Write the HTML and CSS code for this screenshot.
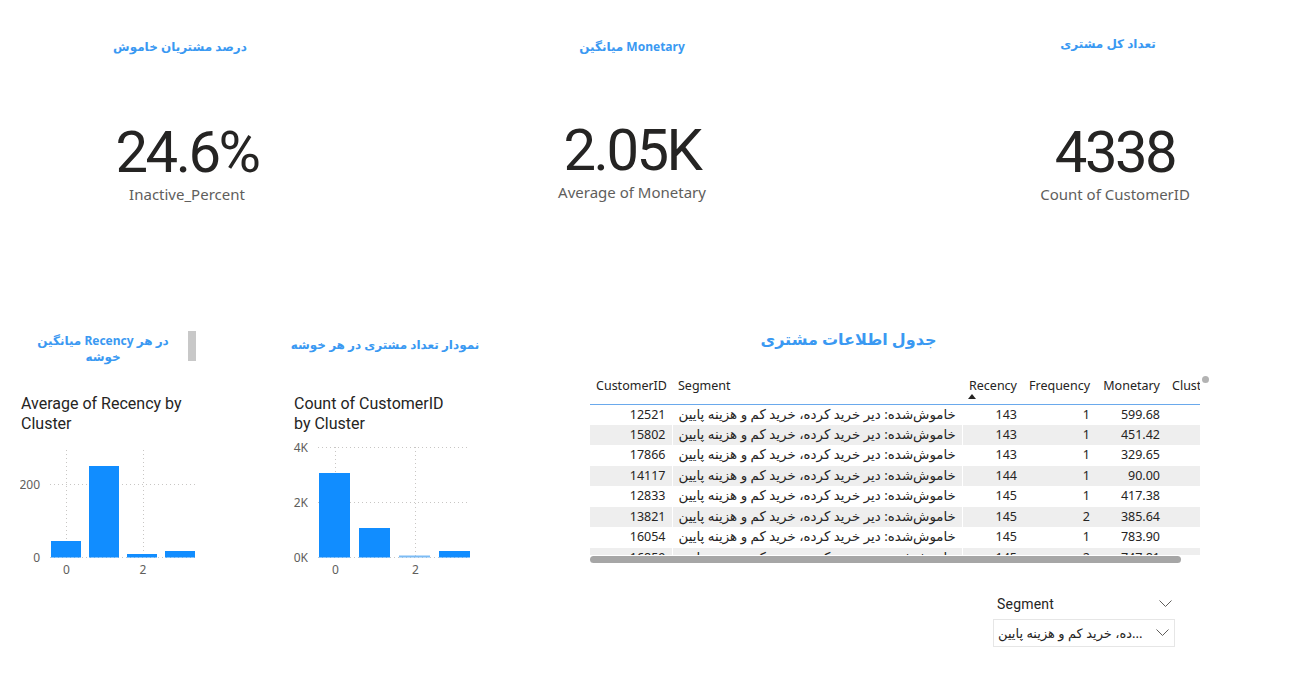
FILE: index.html
```html
<!DOCTYPE html>
<html lang="fa" dir="ltr">
<head>
<meta charset="utf-8">
<title>داشبورد مشتریان</title>
<link rel="stylesheet" href="styles.css">
</head>
<body>
<main class="canvas">
  <section class="kpis">
    <div class="card card-1">
      <div class="card-title">درصد مشتریان خاموش</div>
      <div class="card-value">24.6%</div>
      <div class="card-label">Inactive_Percent</div>
    </div>
    <div class="card card-2">
      <div class="card-title">میانگین Monetary</div>
      <div class="card-value">2.05K</div>
      <div class="card-label">Average of Monetary</div>
    </div>
    <div class="card card-3">
      <div class="card-title">تعداد کل مشتری</div>
      <div class="card-value">4338</div>
      <div class="card-label">Count of CustomerID</div>
    </div>
  </section>

  <section class="lower">
    <div class="chart chart-1">
      <div class="tbox">
        <div class="tbox-text">میانگین Recency در هر<br>خوشه</div>
        <div class="tbox-scroll"></div>
      </div>
      <div class="chart-title">Average of Recency by<br>Cluster</div>
      <svg class="plot" width="180" height="140" viewBox="0 0 180 140">
        <g class="grid">
          <line x1="46.5" y1="10" x2="46.5" y2="117"/>
          <line x1="123.5" y1="10" x2="123.5" y2="117"/>
          <line x1="30" y1="44.5" x2="176" y2="44.5"/>
          <line x1="30" y1="117.5" x2="176" y2="117.5"/>
        </g>
        <g class="bars">
          <rect x="31" y="101" width="30" height="16.5"/>
          <rect x="69" y="26" width="30" height="91.5"/>
          <rect x="107" y="114" width="30" height="3.5"/>
          <rect x="145" y="111" width="30" height="6.5"/>
        </g>
        <g class="ylab">
          <text x="20" y="49">200</text>
          <text x="20" y="122">0</text>
        </g>
        <g class="xlab">
          <text x="46.5" y="134">0</text>
          <text x="123" y="134">2</text>
        </g>
      </svg>
    </div>

    <div class="chart chart-2">
      <div class="tbox tbox-single">
        <div class="tbox-text">نمودار تعداد مشتری در هر خوشه</div>
      </div>
      <div class="chart-title">Count of CustomerID<br>by Cluster</div>
      <svg class="plot" width="190" height="140" viewBox="0 0 190 140">
        <g class="grid">
          <line x1="45.5" y1="7" x2="45.5" y2="117"/>
          <line x1="125.5" y1="7" x2="125.5" y2="117"/>
          <line x1="28" y1="7.5" x2="179" y2="7.5"/>
          <line x1="28" y1="62.5" x2="179" y2="62.5"/>
          <line x1="28" y1="117.5" x2="179" y2="117.5"/>
        </g>
        <g class="bars">
          <rect x="29" y="33" width="31" height="84.5"/>
          <rect x="69" y="88" width="31" height="29.5"/>
          <rect class="bar-light" x="109" y="115.5" width="31" height="2"/>
          <rect x="149" y="111" width="31" height="6.5"/>
        </g>
        <g class="ylab">
          <text x="18" y="12">4K</text>
          <text x="18" y="67">2K</text>
          <text x="18" y="122">0K</text>
        </g>
        <g class="xlab">
          <text x="45.5" y="134">0</text>
          <text x="125.5" y="134">2</text>
        </g>
      </svg>
    </div>

    <div class="table-area">
      <div class="table-title">جدول اطلاعات مشتری</div>
      <div class="tbl-wrap">
        <table class="tbl">
          <colgroup>
            <col class="c-id"><col class="c-seg"><col class="c-rec"><col class="c-freq"><col class="c-mon"><col class="c-clu">
          </colgroup>
          <thead>
            <tr>
              <th class="num">CustomerID</th>
              <th class="txt">Segment</th>
              <th class="num sorted">Recency<span class="sort-arrow"></span></th>
              <th class="num">Frequency</th>
              <th class="num">Monetary</th>
              <th class="txt">Cluster</th>
            </tr>
          </thead>
          <tbody>
            <tr><td class="num">12521</td><td class="seg">خاموش‌شده: دیر خرید کرده، خرید کم و هزینه پایین</td><td class="num">143</td><td class="num">1</td><td class="num">599.68</td><td></td></tr>
            <tr><td class="num">15802</td><td class="seg">خاموش‌شده: دیر خرید کرده، خرید کم و هزینه پایین</td><td class="num">143</td><td class="num">1</td><td class="num">451.42</td><td></td></tr>
            <tr><td class="num">17866</td><td class="seg">خاموش‌شده: دیر خرید کرده، خرید کم و هزینه پایین</td><td class="num">143</td><td class="num">1</td><td class="num">329.65</td><td></td></tr>
            <tr><td class="num">14117</td><td class="seg">خاموش‌شده: دیر خرید کرده، خرید کم و هزینه پایین</td><td class="num">144</td><td class="num">1</td><td class="num">90.00</td><td></td></tr>
            <tr><td class="num">12833</td><td class="seg">خاموش‌شده: دیر خرید کرده، خرید کم و هزینه پایین</td><td class="num">145</td><td class="num">1</td><td class="num">417.38</td><td></td></tr>
            <tr><td class="num">13821</td><td class="seg">خاموش‌شده: دیر خرید کرده، خرید کم و هزینه پایین</td><td class="num">145</td><td class="num">2</td><td class="num">385.64</td><td></td></tr>
            <tr><td class="num">16054</td><td class="seg">خاموش‌شده: دیر خرید کرده، خرید کم و هزینه پایین</td><td class="num">145</td><td class="num">1</td><td class="num">783.90</td><td></td></tr>
            <tr><td class="num">16859</td><td class="seg">خاموش‌شده: دیر خرید کرده، خرید کم و هزینه پایین</td><td class="num">145</td><td class="num">2</td><td class="num">747.81</td><td></td></tr>
          </tbody>
        </table>
      </div>
      <div class="hscroll"></div>
      <span class="vdot"></span>

      <div class="slicer">
        <div class="slicer-head">
          <span class="slicer-name">Segment</span>
          <svg class="chev" width="13" height="8" viewBox="0 0 13 8"><polyline points="0.5,0.5 6.5,6.5 12.5,0.5"/></svg>
        </div>
        <div class="slicer-box">
          <span class="slicer-value" dir="ltr">ده، خرید کم و هزینه پایین...</span>
          <svg class="chev" width="13" height="8" viewBox="0 0 13 8"><polyline points="0.5,0.5 6.5,6.5 12.5,0.5"/></svg>
        </div>
      </div>
    </div>
  </section>
</main>
</body>
</html>
```
FILE: styles.css
```css
* { box-sizing: border-box; margin: 0; padding: 0; }

html, body {
  width: 1296px;
  height: 689px;
  overflow: hidden;
  background: #ffffff;
}

body {
  font-family: "Noto Sans", "DejaVu Sans", sans-serif;
  color: #252423;
}

.canvas {
  width: 1296px;
  height: 689px;
}

/* ---------- KPI cards ---------- */
.kpis {
  display: flex;
  height: 330px;
  padding-top: 36px;
}

.card {
  width: 300px;
  display: flex;
  flex-direction: column;
  align-items: center;
}

.card-1 { margin-left: 34px; }
.card-2 { margin-left: 148px; }
.card-3 { margin-left: 178px; }

.card-title {
  font: 700 12px/22px "Noto Sans", "DejaVu Sans", sans-serif;
  color: #3a99f2;
  white-space: nowrap;
}

.card-value {
  margin-top: 62px;
  font: 400 58px/64px Roboto, "DejaVu Sans", sans-serif;
  letter-spacing: -2.5px;
  color: #252423;
}

.card-label {
  font: 400 15px/20px "Noto Sans", "DejaVu Sans", sans-serif;
  color: #605e5c;
}

.card-1 .card-title { padding-right: 8px; }
.card-1 .card-value,
.card-1 .card-label { padding-left: 6px; }

.card-2 .card-value { margin-top: 60px; }

.card-3 .card-title { padding-right: 4px; margin-top: -3px; }
.card-3 .card-value { margin-top: 65px; }
.card-3 .card-value,
.card-3 .card-label { padding-left: 10px; }

/* ---------- lower row ---------- */
.lower {
  display: flex;
  align-items: flex-start;
}

.chart-1 { margin-left: 20px; width: 180px; }
.chart-2 { margin-left: 90px; width: 190px; }

.tbox {
  display: flex;
  height: 34px;
}

.tbox-text {
  flex: 1;
  text-align: center;
  padding-top: 3px;
  font: 700 12px/16px "Noto Sans", "DejaVu Sans", sans-serif;
  color: #3a99f2;
}

.tbox-single .tbox-text {
  padding-top: 7px;
  white-space: nowrap;
}

.tbox-scroll {
  width: 8px;
  height: 30px;
  margin: 1px 4px 0 2px;
  background: #c8c8c8;
}

.chart-title {
  margin-top: 30px;
  padding-left: 1px;
  font: 400 16px/20px Roboto, "DejaVu Sans", sans-serif;
  color: #252423;
}

.chart-2 .chart-title { padding-left: 4px; }

.plot {
  display: block;
  margin-top: 6px;
}

.grid line {
  stroke: #c8c6c4;
  stroke-width: 1;
  stroke-dasharray: 1 3;
}

.bars rect { fill: #118dff; }
.bars .bar-light { fill: #7cbcf5; }

.ylab text {
  font: 400 12px "Noto Sans", sans-serif;
  fill: #605e5c;
  text-anchor: end;
}

.xlab text {
  font: 400 12px "Noto Sans", sans-serif;
  fill: #605e5c;
  text-anchor: middle;
}

/* ---------- table ---------- */
.table-area {
  margin-left: 110px;
  width: 620px;
  position: relative;
}

.table-title {
  margin-top: -4px;
  padding-right: 103px;
  text-align: center;
  font: 700 16px/26px "Noto Sans", "DejaVu Sans", sans-serif;
  color: #3a99f2;
}

.tbl-wrap {
  margin-top: 24px;
  width: 610px;
  height: 179px;
  overflow: hidden;
}

.tbl {
  width: 636px;
  table-layout: fixed;
  border-collapse: collapse;
  font: 400 12.5px "Noto Sans", "DejaVu Sans", sans-serif;
  color: #252423;
}

.c-id { width: 82px; }
.c-seg { width: 290px; }
.c-rec { width: 61px; }
.c-freq { width: 73px; }
.c-mon { width: 70px; }
.c-clu { width: 60px; }

.tbl th {
  height: 28px;
  padding: 0 6px;
  vertical-align: top;
  line-height: 20px;
  font-weight: 400;
  white-space: nowrap;
  overflow: hidden;
  border-bottom: 1px solid #6aa9ec;
}

.tbl th.sorted { position: relative; }

.sort-arrow {
  position: absolute;
  left: 6px;
  top: 18px;
  width: 0;
  height: 0;
  border-left: 4.5px solid transparent;
  border-right: 4.5px solid transparent;
  border-bottom: 5px solid #252423;
}

.tbl td {
  height: 20.5px;
  padding: 0 6px;
  line-height: 19px;
  vertical-align: top;
  white-space: nowrap;
  overflow: hidden;
}

.tbl .num { text-align: right; }
.tbl .txt { text-align: left; }

.tbl td.seg {
  text-align: left;
  font-size: 13.4px;
  border-left: 1px solid #ffffff;
  border-right: 1px solid #ffffff;
}

.tbl tbody tr:nth-child(even) { background: #eeeeee; }

.hscroll {
  margin-top: 1px;
  width: 591px;
  height: 7px;
  border-radius: 4px;
  background: #a6a6a6;
}

.vdot {
  position: absolute;
  left: 612px;
  top: 46px;
  width: 7px;
  height: 7px;
  border-radius: 50%;
  background: #b3b3b3;
}

/* ---------- slicer ---------- */
.slicer {
  margin-top: 32px;
  margin-left: 403px;
  width: 182px;
}

.slicer-head {
  display: flex;
  justify-content: space-between;
  align-items: center;
  height: 18px;
  padding: 0 3px 0 4px;
}

.slicer-name {
  font: 400 14px/18px Roboto, "Noto Sans", sans-serif;
  letter-spacing: 0.2px;
  color: #252423;
}

.slicer-box {
  margin-top: 6px;
  height: 28px;
  border: 1px solid #e6e6e6;
  display: flex;
  align-items: center;
  justify-content: space-between;
  padding: 0 5px 0 4px;
}

.slicer-value {
  font: 400 13px/18px "Noto Sans", "DejaVu Sans", sans-serif;
  color: #252423;
  white-space: nowrap;
}

.chev polyline {
  fill: none;
  stroke: #605e5c;
  stroke-width: 1;
}
```
